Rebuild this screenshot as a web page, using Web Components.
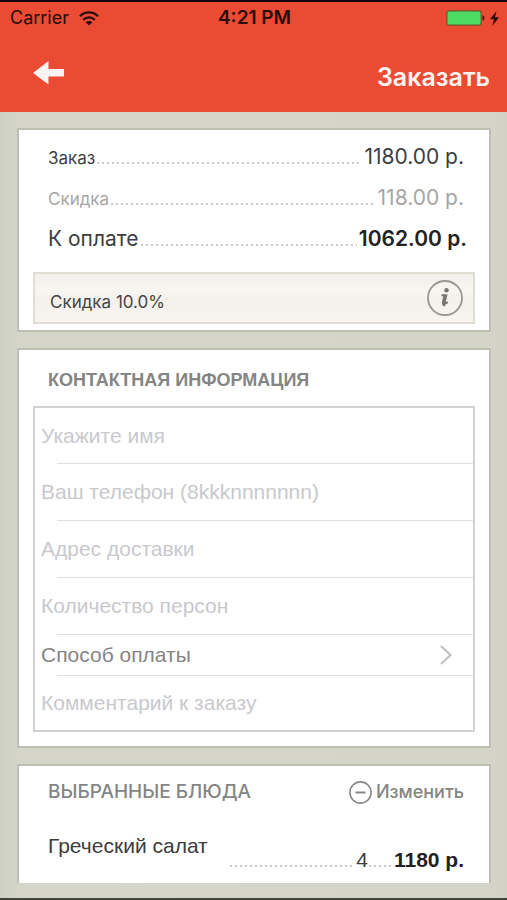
<!DOCTYPE html>
<html lang="ru">
<head>
<meta charset="utf-8">
<meta name="viewport" content="width=device-width, initial-scale=1">
<title>Заказать</title>
<style>
  body { margin: 0; background: #d4d4c9; font-family: Inter, "Liberation Sans", sans-serif; color: #444; }
</style>
</head>
<body>
<order-screen></order-screen>

<script>
const define = (name, html) => {
  const template = document.createElement('template');
  template.innerHTML = html;
  customElements.define(name, class extends HTMLElement {
    constructor() {
      super();
      this.attachShadow({ mode: 'open' }).append(template.content.cloneNode(true));
    }
  });
};

define('status-bar', `
<style>
  :host { display: grid; grid-template-columns: 1fr auto 1fr; align-items: center; height: 32px; padding: 0 8px 0 10px; font-size: 19px; line-height: 24px; color: #2a0b06; }
  .side { display: flex; align-items: center; gap: 10px; font-size: 18px; }
  .end { justify-content: flex-end; gap: 5px; }
  .time { font-weight: 600; }
  svg { display: block; }
</style>
<div class="side"><span>Carrier</span>
  <svg width="20" height="15" viewBox="0 0 20 15" aria-hidden="true" fill="none" stroke="#2a0b06" stroke-width="2.3">
    <path d="M1 5.2C6 .2 14 .2 19 5.2"/><path d="M4.2 8.8C7.600 5.500 12.400 5.500 15.800 8.800"/>
    <path d="M10 14.500L6.700 11.200C8.600 9.500 11.400 9.500 13.300 11.200Z" fill="#2a0b06" stroke="none"/>
  </svg></div>
<span class="time">4:21 PM</span>
<div class="side end">
  <svg width="39" height="16" viewBox="0 0 39 16" aria-hidden="true">
    <rect x=".8" y=".8" width="34.400" height="14.400" rx="2.500" fill="#4cd964" stroke="#7d5a2c" stroke-width="1.400"/>
    <path d="M36.500 5.300C39.200 6 39.200 10 36.500 10.700Z" fill="#4b150b"/>
  </svg>
  <svg width="9" height="15" viewBox="0 0 9 15" aria-hidden="true"><path d="M6.500 0L0 8.300H4L2.300 15L9 6.300H5Z" fill="#2a0b06"/></svg>
</div>`);

define('nav-bar', `
<style>
  :host { display: flex; align-items: center; justify-content: space-between; height: 78px; padding: 0 17px 0 33px; box-sizing: border-box; }
  button { border: 0; padding: 0; background: none; display: block; }
  svg { display: block; }
  h1 { margin: 0; padding-top: 8px; font-size: 25px; line-height: 32px; font-weight: 600; color: #fff4ef; }
</style>
<button type="button" aria-label="Назад"><svg width="31" height="24" viewBox="0 0 31 24"><path d="M0 12L15.500 0V8H31V15.500H15.500V23.500Z" fill="#f8f4f3"/></svg></button>
<h1><slot></slot></h1>`);

define('paper-card', `
<style>
  :host { display: block; background: #fff; border: 2px solid #bfbfb5; padding: 0 14px 6px; }
  :host([open-end]) { border-bottom: 0; }
</style>
<slot></slot>`);

define('dot-leader', `
<style>
  :host { flex: 1; min-width: 0; height: 2px; background: repeating-linear-gradient(90deg, #cacaca 0 2px, transparent 2px 5px); }
</style>`);

define('total-row', `
<style>
  :host { display: flex; align-items: baseline; gap: 2px; height: 41px; line-height: 41px; padding: 0 11px 0 15px; font-size: 21px; color: #3e3e3e; }
  .name { font-size: 17px; }
  :host([muted]) { color: #a6a6a6; }
  :host([strong]) { padding-right: 8px; }
  :host([strong]) .name { font-size: 21px; }
  :host([strong]) .value { font-weight: 600; color: #222; }
</style>
<span class="name"><slot></slot></span><dot-leader></dot-leader><span class="value"><slot name="value"></slot></span>`);

define('discount-note', `
<style>
  :host { display: flex; align-items: center; justify-content: space-between; height: 52px; box-sizing: border-box; margin-top: 13px; padding: 0 10px 0 15px; border: 2px solid #e0ddd2; background: linear-gradient(#f2efe9, #f8f6f1 35%, #f4f1ec 50%, #f8f5f0); font-size: 17px; line-height: 24px; }
  span { padding-top: 8px; }
  button { border: 0; padding: 0; background: none; }
  svg { display: block; }
</style>
<span><slot></slot></span>
<button type="button" aria-label="О скидке"><svg width="36" height="36" viewBox="0 0 36 36">
  <circle cx="18" cy="18" r="17" fill="none" stroke="#99978f" stroke-width="1.800"/>
  <circle cx="19.500" cy="10.200" r="2.200" fill="#77756f"/>
  <path d="M14.500 15.200H19.300L17.600 22.600Q17.400 24 18.700 23.300L20.800 22.200" fill="none" stroke="#77756f" stroke-width="2"/>
  <path d="M18 15L16.400 22.200Q16 25.300 18.200 24.800" fill="none" stroke="#77756f" stroke-width="2.800"/>
</svg></button>`);

define('section-title', `
<style>
  :host { display: flex; align-items: center; justify-content: space-between; padding: 0 11px 0 15px; color: #858585; height: 56px; }
  h2 { margin: 0; font: bold 18px/24px "Liberation Sans", Arial, sans-serif; padding-top: 4px; }
  :host([light]) { height: 52px; }
  :host([light]) h2 { font: 500 19px/24px Inter, sans-serif; padding: 0; }
</style>
<h2><slot></slot></h2><slot name="action"></slot>`);

define('edit-button', `
<style>
  button { display: flex; align-items: center; gap: 4px; border: 0; padding: 0; background: none; font: 500 18px/24px Inter, sans-serif; color: #85857f; }
  svg { display: block; }
</style>
<button type="button"><svg width="23" height="23" viewBox="0 0 23 23" fill="none" stroke="#888882" aria-hidden="true"><circle cx="11.500" cy="11.500" r="10.600" stroke-width="1.600"/><path d="M6.500 11.500H16.500" stroke-width="2"/></svg><slot></slot></button>`);

define('contact-form', `
<style>
  :host { display: block; }
  form { border: 2px solid #d2d2d2; padding-left: 6px; font: 21px/24px "Liberation Sans", Arial, sans-serif; }
  .row { position: relative; }
  .row + .row::before { content: ""; position: absolute; top: 0; left: 16px; right: 0; height: 1px; background: #e0e0e0; }
  input { display: block; width: 100%; height: 57px; box-sizing: border-box; border: 0; padding: 0; background: none; font: inherit; color: #555; outline: 0; }
  .row:first-child input, .row:last-child input { height: 55px; }
  input::placeholder { color: #c9c9cd; opacity: 1; }
  button { display: flex; align-items: center; justify-content: space-between; width: 100%; height: 41px; border: 0; padding: 0 21px 0 0; background: none; font: inherit; color: #858585; text-align: left; }
</style>
<form>
  <div class="row"><input type="text" aria-label="Имя" placeholder="Укажите имя"></div>
  <div class="row"><input type="tel" aria-label="Телефон" placeholder="Ваш телефон (8kkknnnnnnn)"></div>
  <div class="row"><input type="text" aria-label="Адрес" placeholder="Адрес доставки"></div>
  <div class="row"><input type="text" inputmode="numeric" aria-label="Количество персон" placeholder="Количество персон"></div>
  <div class="row"><button type="button">Способ оплаты<svg width="12" height="20" viewBox="0 0 12 20" aria-hidden="true"><path d="M1 1L10.500 10L1 19" fill="none" stroke="#c4c4c6" stroke-width="2.400"/></svg></button></div>
  <div class="row"><input type="text" aria-label="Комментарий" placeholder="Комментарий к заказу"></div>
</form>`);

define('dish-row', `
<style>
  :host { display: block; padding: 0 11px 0 15px; font: 21px/24px "Liberation Sans", Arial, sans-serif; color: #3c3c3c; }
  .name { display: block; padding-top: 16px; height: 24px; }
  .sum { display: flex; align-items: baseline; gap: 1px; margin-left: 182px; margin-top: -10px; }
  .gap { flex: 0 0 24px; }
  b { color: #222; }
</style>
<span class="name"><slot></slot></span>
<div class="sum"><dot-leader></dot-leader><slot name="count"></slot><dot-leader class="gap"></dot-leader><b><slot name="price"></slot></b></div>`);

define('order-screen', `
<style>
  :host { display: block; border-top: 2px solid #160302; border-bottom: 2px solid #42423e; }
  header { background: #eb4a33; }
  main { display: flex; flex-direction: column; gap: 16px; padding: 16px 16px 15px 17px; background: linear-gradient(90deg, #cfd0c4, #d5d5ca 4%, #d4d4c9 96%, #d1d1c5); }
  .totals { padding-top: 6px; }
  .contact { padding-bottom: 14px; }
  .dishes { padding-bottom: 11px; }
</style>
<header><status-bar></status-bar><nav-bar>Заказать</nav-bar></header>
<main>
  <paper-card class="totals">
    <total-row>Заказ<span slot="value">1180.00 р.</span></total-row>
    <total-row muted>Скидка<span slot="value">118.00 р.</span></total-row>
    <total-row strong>К оплате<span slot="value">1062.00 р.</span></total-row>
    <discount-note>Скидка 10.0%</discount-note>
  </paper-card>
  <paper-card class="contact">
    <section-title>КОНТАКТНАЯ ИНФОРМАЦИЯ</section-title>
    <contact-form></contact-form>
  </paper-card>
  <paper-card open-end class="dishes">
    <section-title light>ВЫБРАННЫЕ БЛЮДА<edit-button slot="action">Изменить</edit-button></section-title>
    <dish-row>Греческий салат<span slot="count">4</span><span slot="price">1180 р.</span></dish-row>
  </paper-card>
</main>`);
</script>
</body>
</html>
